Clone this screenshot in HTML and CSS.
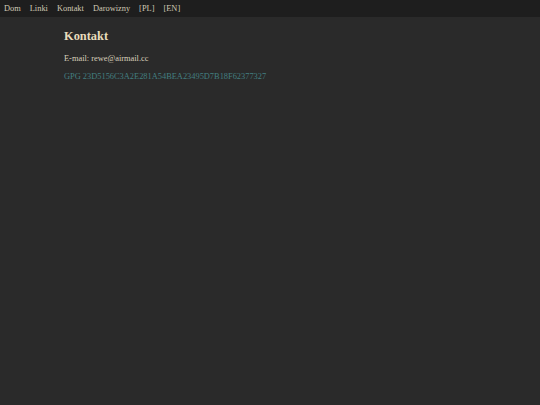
FILE: index.html
```html
<!DOCTYPE html>
<html>
<head>
<meta charset="utf-8">
<link rel="stylesheet" href="styles.css">
</head>
<body>
<nav class="nav">
<a href="#">Dom</a>
<a href="#">Linki</a>
<a href="#">Kontakt</a>
<a href="#">Darowizny</a>
<a href="#">[PL]</a>
<a href="#">[EN]</a>
</nav>
<main class="content">
<h1 class="title">Kontakt</h1>
<p class="line">E-mail: rewe@airmail.cc</p>
<p class="gpg">GPG 23D5156C3A2E281A54BEA23495D7B18F62377327</p>
</main>
</body>
</html>
```
FILE: styles.css
```css
html, body { margin: 0; padding: 0; }
body {
  background: #2a2a2a;
  font-family: "Liberation Serif", "Times New Roman", serif;
  color: #d8d0bc;
  height: 405px;
}
.nav {
  background: #1e1e1e;
  height: 17px;
  display: flex;
  align-items: center;
  gap: 9px;
  padding-left: 4px;
  font-size: 8.4px;
}
.nav a { color: #d0c8b4; text-decoration: none; }
.content { padding-left: 64px; }
.title {
  margin: 12px 0 0;
  font-size: 12.4px;
  font-weight: bold;
  color: #e8dcbc;
  line-height: 15px;
}
.line { margin: 10px 0 0; font-size: 8.4px; line-height: 10px; color: #d8d0bc; }
.gpg { margin: 8px 0 0; font-size: 8.4px; line-height: 10px; color: #437f80; }
```
